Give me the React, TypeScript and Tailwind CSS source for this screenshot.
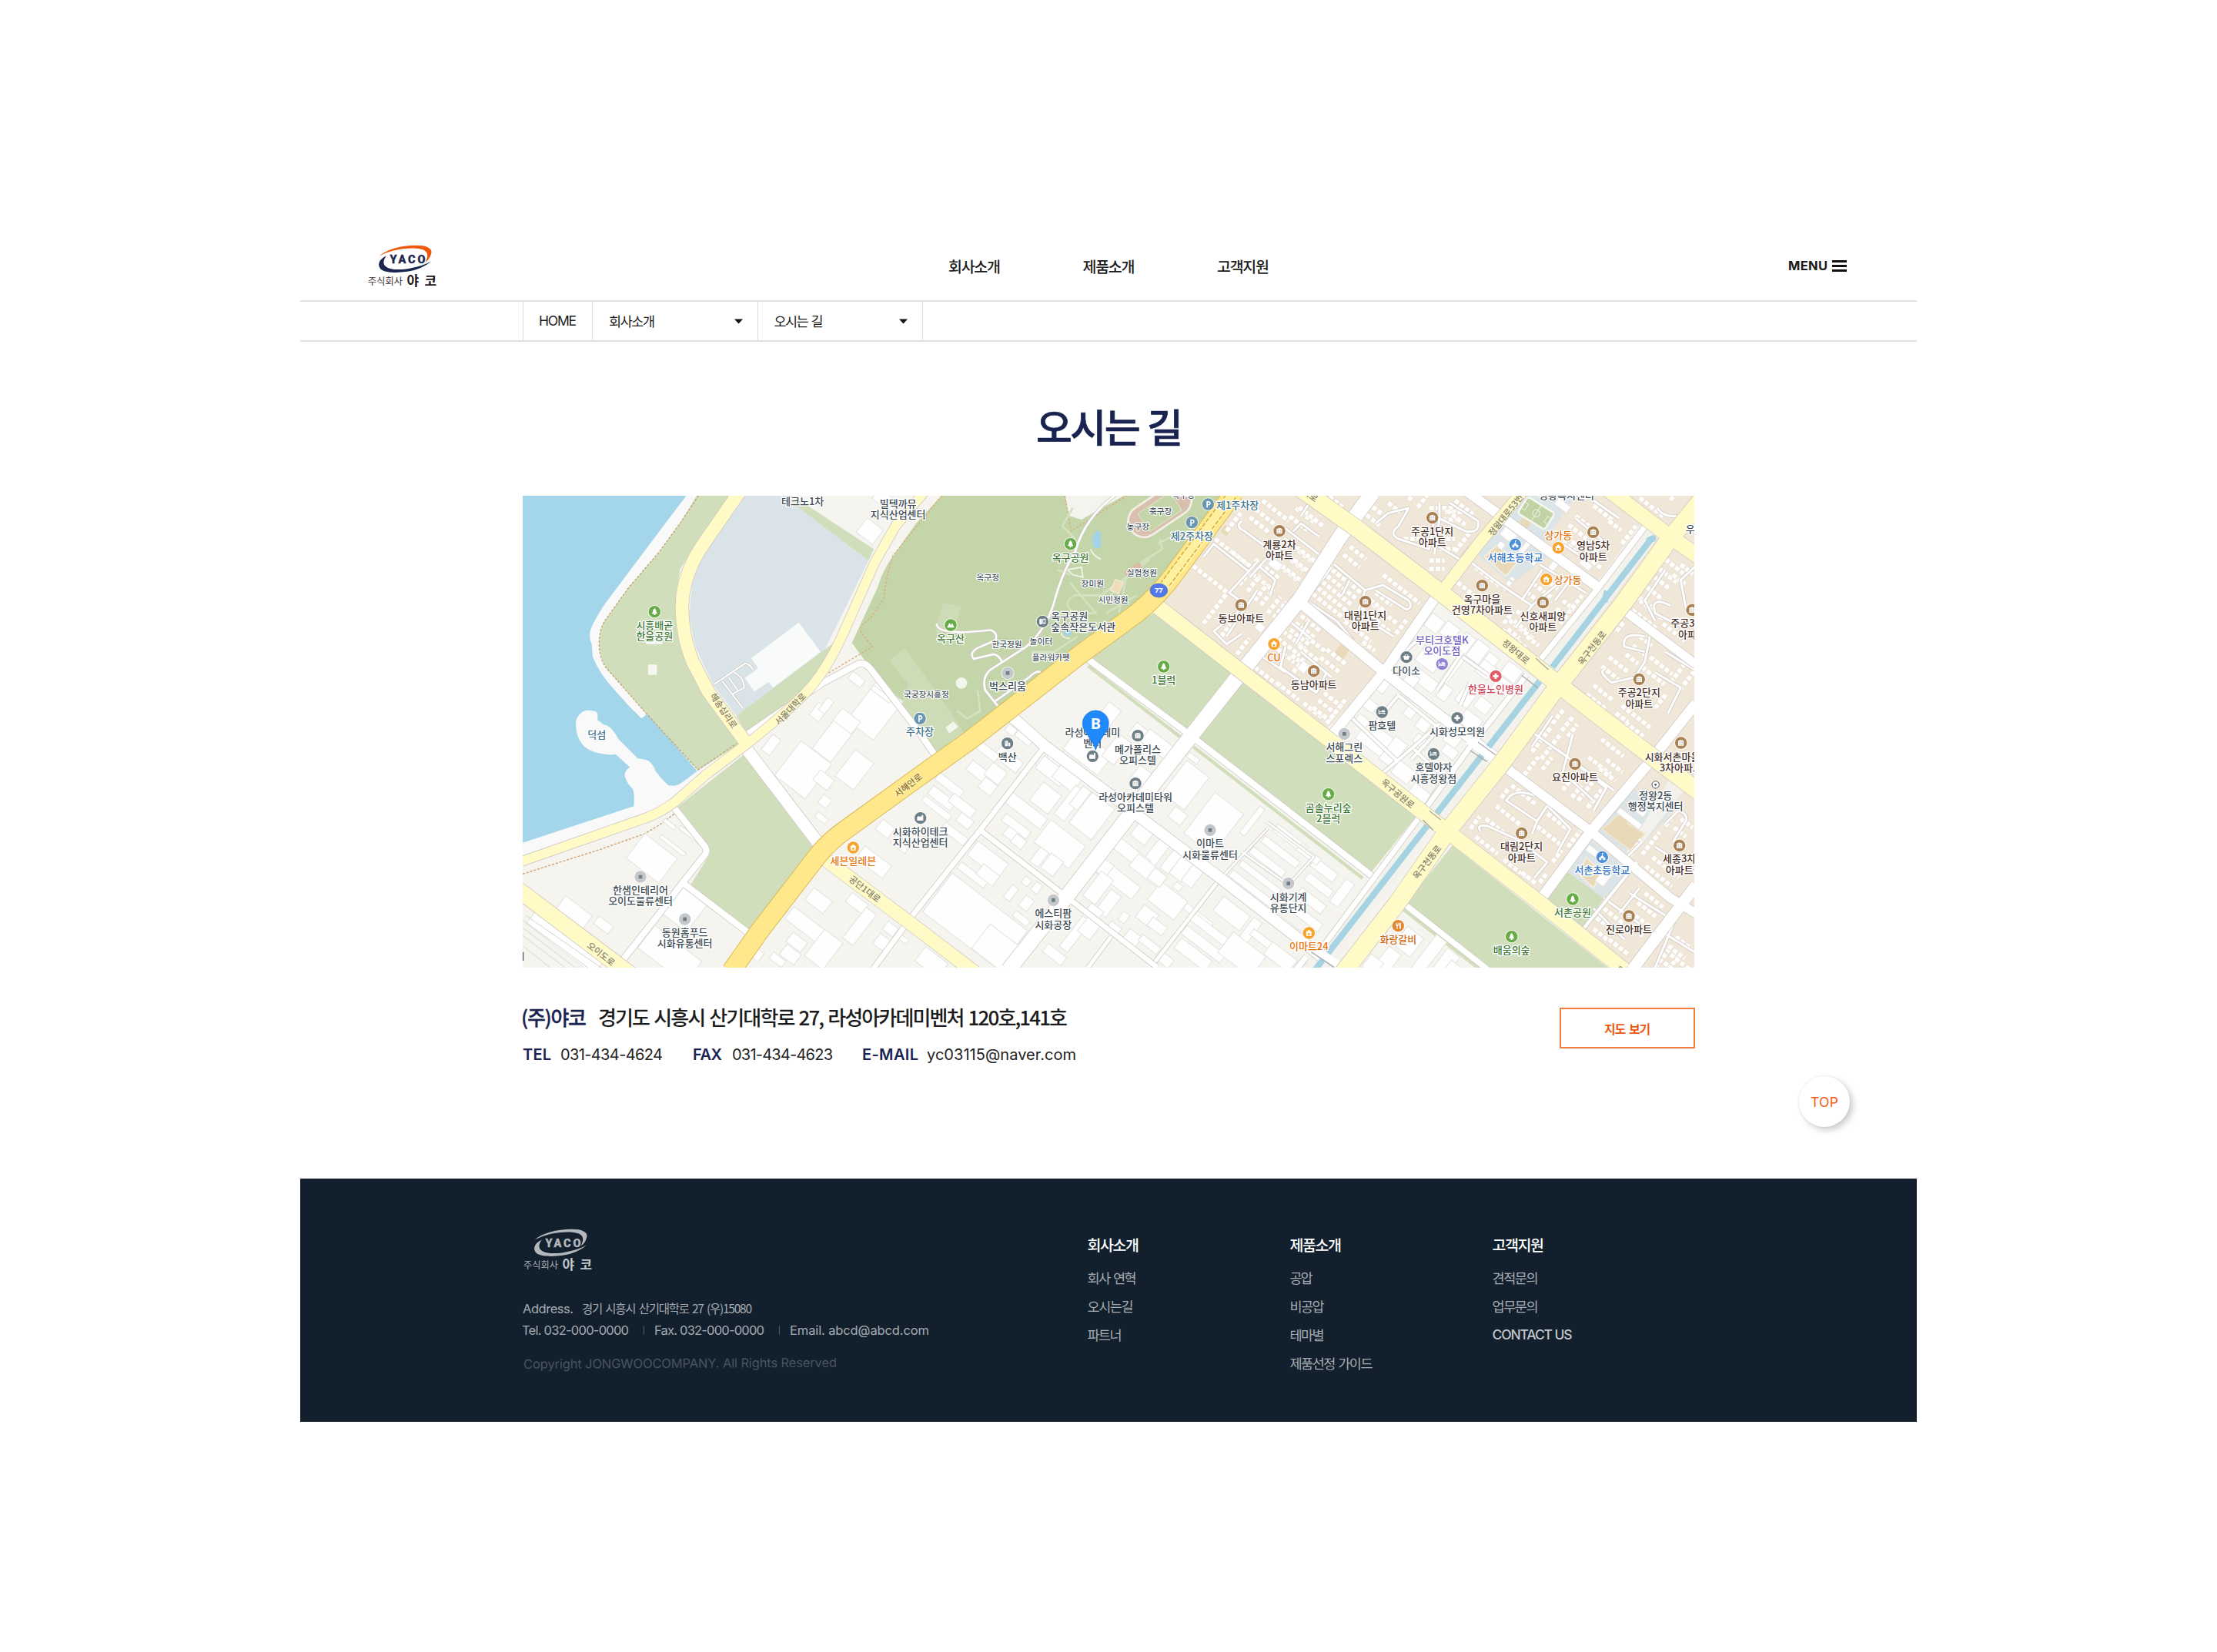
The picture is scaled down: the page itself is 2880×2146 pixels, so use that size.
import { useLayoutEffect, useRef, type ReactNode } from "react";

/* Text whose tracking is adjusted so that it fills a given width. */
function Fit({ w, className = "", children }: { w: number; className?: string; children: string }) {
  const ref = useRef<HTMLSpanElement>(null);
  useLayoutEffect(() => {
    const el = ref.current;
    if (!el) return;
    el.style.letterSpacing = "0px";
    const natural = el.getBoundingClientRect().width;
    el.style.letterSpacing = `${(w - natural) / Math.max(1, children.length - 1)}px`;
  }, [w, children]);
  return (
    <span className={`block shrink-0 ${className}`} style={{ width: w }}>
      <span ref={ref} className="inline-block whitespace-nowrap">
        {children}
      </span>
    </span>
  );
}

function Logo({ mono = false }: { mono?: boolean }) {
  const a = mono ? "#b4b8bd" : "#ee5a0c";
  const b = mono ? "#b4b8bd" : "#1a2550";
  const c = mono ? "#a9afb5" : "#3a3032";
  const d = mono ? "#c3c7ca" : "#1d1416";
  return (
    <svg width="91" height="56" viewBox="0 0 91 56" className="block shrink-0">
      <path d="M14.5 14.8C24 6 43 .8 63 .8C78 .8 84.5 5.500 82 12C80.500 17 78.500 20 74.500 22.600C77.500 16 78.500 12 75 8.500C70 4.200 58 4 46 5.200C34 6.500 23 10 14.500 14.800Z" fill={a} />
      <path d="M24 14.500C19.500 20 18.500 26 25 29.500C32 33 45 32.500 55 30.500C66 28.500 75 25.500 82 21.500C75 28 63 33 51 34.800C38 36.600 23 36.500 17 32C11.500 27 14 18.500 24 14.500Z" fill={b} />
      <text x="28.500" y="24" textLength="46" lengthAdjust="spacing" fontSize="14.500" fontWeight="800" fill={b} stroke={b} strokeWidth=".4" className="font-['Roboto','Liberation_Sans',sans-serif]">YACO</text>
      <text x="0" y="51.500" textLength="45" lengthAdjust="spacingAndGlyphs" fontSize="12.500" fill={c} className="font-['Noto_Sans_CJK_KR',sans-serif]">주식회사</text>
      <g fontSize="17" fontWeight="700" fill={d} className="font-['Noto_Sans_CJK_KR',sans-serif]">
        <text x="50.500" y="52.500">야</text>
        <text x="73.500" y="52.500">코</text>
      </g>
    </svg>
  );
}

/* ------------------------------------------------------------------ map */

type Road = { d: string; w: number; c?: string; e?: string };

const YELLOW = "#fffac6";

const MINOR: Road[] = [
  { d: "M2350 0Q2220 90 2180 230Q2130 310 2100 420Q2070 530 1990 600L1850 690Q1815 720 1830 770L1885 840", w: 8 },
  { d: "M1640 510Q1640 560 1850 535Q1880 545 1870 575L1800 605Q1765 625 1785 648L1860 630Q1880 630 1895 658", w: 7 },
  { d: "M1865 815L2000 720Q2030 690 2045 700", w: 7 },
  { d: "M775 745L895 665Q915 670 925 690M845 785L890 760Q890 720 850 700M805 735L885 840M830 720L865 770", w: 6 },
  { d: "M2930 1310L2750 1500M2930 1285L3110 1420L3010 1530M2830 1400L3000 1520", w: 8 },
  { d: "M2740 1510L2490 1830M2320 1730L2230 1851M2490 1840L2170 1590", w: 14 },
  { d: "M3440 640L3520 570M3690 620L3590 770M3690 640L3790 710M3720 740L3680 830M3440 790L3340 910M3440 790L3600 920L3490 1040", w: 12 },
  { d: "M3370 1100L3500 990L3600 900M3260 880L3440 1050M3500 1000L3620 1110L3540 1230M3660 620L3560 560", w: 12 },
  { d: "M3100 30L3060 90M2680 250L2720 200L2860 310M2890 380L2770 560M2890 270L2780 390L2850 440M3000 140L3130 240M3030 150L3060 120L3130 170", w: 9 },
  { d: "M2830 110Q2800 130 2840 150L2950 230L2860 330M2900 290L2960 340L2940 400M2820 460L2720 540L2770 590L2830 550", w: 9 },
  { d: "M3090 500L3040 590M3100 570L2990 480M2910 640L3000 700M3000 600L2980 680L3120 780L3160 700M3060 620L3180 720", w: 9 },
  { d: "M3190 280L3310 380L3380 360L3480 420Q3500 450 3470 455L3350 380M3310 380L3280 470L3420 560M3250 340L3220 400", w: 9 },
  { d: "M3180 290L3080 420L3200 500L3300 620M3350 120L3400 80L3480 60L3440 130Q3400 160 3440 180L3560 220L3580 100", w: 9 },
  { d: "M3600 40L3600 100L3700 150Q3760 160 3750 110L3640 40M3600 100L3580 240M3580 200L3680 260L3720 210", w: 9 },
  { d: "M3720 270L3840 360L3960 440L4080 340M3960 440L3900 520M4000 300L3920 420M3990 280L4170 390M4140 300L4050 420", w: 9 },
  { d: "M4130 100L4240 190L4200 260M4200 30L4300 100M4080 200L4170 260M4450 60Q4470 100 4550 90L4594 30M4480 300L4400 420L4440 500", w: 9 },
  { d: "M4594 290L4540 340L4560 450M4500 440Q4420 400 4440 470L4540 520M4400 560Q4310 540 4320 600L4400 620M4420 560L4400 660L4360 720L4270 740Q4220 700 4240 690", w: 9 },
  { d: "M4480 620L4594 690M4440 700L4540 760L4490 860M4040 870L3960 990M3970 940L4280 1160M4060 1000L4250 1150L4200 1240M4120 940L4080 1090L4200 1200", w: 9 },
  { d: "M3970 1180Q3890 1150 3860 1200L3980 1280L4020 1220L4110 1310L4060 1400M3760 1320Q3740 1290 3790 1300L3900 1350L4020 1440L3970 1500", w: 9 },
  { d: "M3980 1280L3960 1330M4240 1580L4380 1680M4380 1540L4300 1640M4340 1560L4500 1660M4200 1620L4320 1740M4480 1720L4594 1790M4520 1660L4440 1851", w: 9 },
  { d: "M4480 1290L4530 1240Q4570 1250 4560 1280L4510 1360M4440 1380L4594 1480M4390 1360L4330 1420", w: 9 },
];

const WHITE: Road[] = [
  { d: "M905 940L1190 745L1330 670Q1360 655 1385 690L1570 930L1635 1025", w: 24 },
  { d: "M900 1000L1190 1380", w: 46 },
  { d: "M615 1225L738 1380Q748 1398 736 1412L650 1520L560 1640L410 1830", w: 24 },
  { d: "M650 1520L915 1722", w: 24 },
  { d: "M1930 870L2060 985L2400 1240L2750 1505L3150 1815", w: 42 },
  { d: "M2060 990L1810 1315L1560 1630L1390 1860", w: 20 },
  { d: "M1810 1315L2140 1570L2500 1850", w: 20 },
  { d: "M3340 0L3210 175L3060 410L2840 685L2630 950L2420 1220L2150 1570L1920 1860", w: 58 },
  { d: "M2225 645L2635 950L3120 1325L3335 1492", w: 24 },
  { d: "M3060 430L3385 700L3570 845L3830 1040", w: 40 },
  { d: "M3590 400L3390 690L3180 945", w: 38 },
  { d: "M3700 -10L4220 370", w: 38 },
  { d: "M4410 120L4220 370L3985 660", w: 22 },
  { d: "M3940 710L3720 990L3510 1280L3130 1790", w: 20 },
  { d: "M4320 460L4600 670", w: 34 },
  { d: "M3870 1080L4190 1320L4500 1580L4600 1640", w: 36 },
  { d: "M4600 820L4410 1060L4190 1320L3990 1590", w: 40 },
  { d: "M4600 1530L4350 1860", w: 44 },
  { d: "M3465 1605L3790 1860", w: 22 },
  { d: "M4160 1700L4370 1440", w: 12 },
  { d: "M3130 1790L3200 1850M3080 1810L3040 1860", w: 22 },
];

const YELLOWS: Road[] = [
  { d: "M870 0L745 180Q650 310 648 440Q648 560 690 660L750 775L905 985", w: 50, c: YELLOW },
  { d: "M1590 0L1480 130L1400 270L1280 540Q1210 700 1120 790Q1050 860 900 980L740 1100L620 1205Q560 1250 500 1270L20 1438", w: 36, c: YELLOW },
  { d: "M1200 1425L1560 1695L1790 1870", w: 52, c: YELLOW },
  { d: "M0 1540L450 1880", w: 62, c: YELLOW },
  { d: "M2490 435L3360 1110L3630 1320L4000 1605L4320 1860", w: 58, c: YELLOW },
  { d: "M3060 -15L3285 145L3590 378L3960 665L4060 745L4260 900L4410 1015L4610 1165", w: 66, c: YELLOW },
  { d: "M4260 -10L4490 165L4610 250", w: 58, c: YELLOW },
  { d: "M3930 -10L3760 190L3610 385", w: 44, c: YELLOW },
  { d: "M4620 30L4490 190L4317 430L4060 755L3845 1050L3630 1320L3435 1600L3225 1870", w: 68, c: YELLOW },
];

const HIGHWAY = "M840 1865L955 1702L1180 1410Q1225 1355 1290 1310L1560 1115L1770 965L2190 638L2420 470Q2500 405 2560 325L2800 0";

function Roads({ list }: { list: Road[] }) {
  return (
    <g fill="none" strokeLinejoin="round">
      {list.map((r, i) => (
        <path key={`e${i}`} d={r.d} stroke={r.e ?? "#cfcac6"} strokeWidth={r.w + 5} />
      ))}
      {list.map((r, i) => (
        <path key={`f${i}`} d={r.d} stroke={r.c ?? "#ffffff"} strokeWidth={r.w} />
      ))}
    </g>
  );
}

/* Detached buildings: centre x, centre y, width, height, all turned to the street grid. */
const BUILDINGS: number[][] = [
  [1380, 150, 80, 70], [1440, 30, 90, 50],
  [530, 1425, 160, 120], [600, 1292, 55, 16], [612, 1375, 120, 16], [228, 1635, 130, 62], [342, 1685, 70, 36], [660, 1620, 120, 140], [190, 1755, 330, 60], [600, 1800, 230, 110],
  [680, 1335, 105, 14],
  [995, 983, 40, 75], [1120, 1080, 150, 170], [1240, 960, 90, 160], [1200, 1120, 70, 50], [1320, 1080, 90, 130], [1205, 1203, 40, 40], [1192, 1268, 50, 24],
  [1180, 855, 46, 60], [1210, 830, 30, 60], [1400, 850, 130, 190], [1328, 728, 60, 34], [1425, 785, 90, 20], [1290, 890, 90, 60],
  [1440, 1310, 60, 50], [1500, 1370, 70, 40], [1395, 1440, 130, 60], [1330, 1600, 80, 44], [1180, 1590, 90, 60], [1340, 1690, 50, 150], [1150, 1700, 210, 60], [1460, 1700, 50, 40], [1095, 1752, 70, 46], [1070, 1800, 70, 50], [1020, 1820, 60, 30], [1430, 1755, 60, 50], [1510, 1740, 40, 20], [1200, 1780, 90, 130], [940, 1800, 40, 40],
  [1690, 1140, 120, 34], [1660, 1190, 110, 40], [1740, 1220, 110, 40], [1640, 1230, 130, 26], [1800, 1085, 80, 46], [1870, 1095, 70, 60], [1840, 1145, 60, 50], [1750, 1280, 60, 40], [1710, 1330, 110, 34], [1920, 1040, 110, 50], [1840, 1010, 90, 34], [1980, 955, 70, 30], [1930, 925, 40, 30],
  [2300, 880, 60, 120], [2430, 940, 70, 60], [2230, 1010, 170, 100], [2340, 1000, 60, 110], [2500, 980, 120, 60], [2440, 1110, 70, 70],
  [2090, 1085, 120, 60], [2150, 1110, 100, 70], [2065, 1190, 90, 90], [2160, 1210, 50, 140], [2200, 1190, 40, 90], [2100, 1040, 60, 22], [1990, 1240, 170, 50], [1950, 1300, 120, 34], [2245, 1260, 110, 150], [2120, 1370, 170, 110], [1930, 1330, 50, 40], [1960, 1360, 50, 40], [2040, 1420, 40, 70], [2090, 1450, 60, 70], [1840, 1430, 150, 70], [1780, 1490, 130, 30], [1840, 1490, 80, 50], [1930, 1560, 30, 60], [1990, 1515, 30, 30], [2030, 1540, 30, 40], [1990, 1600, 40, 50],
  [1790, 1670, 370, 190], [1970, 1660, 70, 26], [1880, 1780, 170, 120], [1620, 1830, 110, 70],
  [2610, 1140, 110, 160], [2640, 1035, 50, 22], [2720, 1290, 140, 200], [2580, 1260, 60, 50],
  [2440, 1330, 70, 60], [2500, 1400, 50, 120], [2400, 1410, 150, 50], [2460, 1470, 130, 60], [2350, 1510, 170, 60], [2290, 1460, 60, 60], [2560, 1430, 40, 110], [2600, 1460, 60, 100], [2640, 1490, 50, 90], [2540, 1590, 130, 90], [2270, 1540, 60, 120], [2310, 1600, 50, 100], [2580, 1535, 30, 26], [2500, 1500, 60, 50], [2250, 1640, 60, 60], [2370, 1655, 30, 40], [2460, 1650, 70, 60], [2500, 1690, 70, 40], [2330, 1700, 50, 40],
  [2180, 1720, 40, 150], [2240, 1690, 60, 90], [2100, 1800, 90, 40], [2400, 1740, 60, 60], [2470, 1760, 90, 30], [2660, 1650, 130, 26],
  [2700, 1700, 170, 34], [2680, 1760, 190, 40], [2640, 1800, 150, 50], [2790, 1640, 130, 70], [2860, 1710, 40, 110], [2920, 1750, 130, 30], [2830, 1800, 160, 100], [2980, 1810, 120, 60], [2530, 1820, 60, 40],
  [2870, 1280, 24, 130], [3020, 1350, 150, 34], [2980, 1400, 170, 30], [2930, 1440, 160, 30], [2900, 1500, 190, 26], [2870, 1545, 210, 30], [3060, 1640, 190, 36], [3100, 1590, 120, 40], [3130, 1530, 120, 34], [3150, 1470, 110, 40], [3220, 1560, 40, 110], [3090, 1410, 100, 30], [3010, 1690, 160, 30],
  [3350, 960, 130, 90], [3420, 1010, 60, 110], [3260, 1000, 60, 40], [3460, 1090, 80, 60], [3530, 1180, 100, 50],
  [3580, 510, 60, 60], [3640, 540, 60, 60], [3700, 590, 50, 80], [3750, 620, 60, 80], [3800, 655, 50, 50], [3880, 700, 70, 60], [3850, 760, 80, 60], [3780, 690, 60, 60], [3560, 650, 90, 70], [3540, 730, 110, 50], [3650, 690, 30, 120], [3490, 730, 50, 50], [3470, 780, 50, 30], [3380, 750, 40, 60], [3330, 830, 50, 40], [3300, 890, 50, 34], [3620, 780, 40, 60], [3700, 800, 60, 60], [3770, 830, 60, 50], [3490, 850, 40, 60], [3540, 900, 50, 60], [3530, 970, 60, 40], [3650, 960, 60, 50], [3640, 1010, 60, 40], [3580, 1090, 90, 60], [3720, 890, 80, 60],
  [3480, 1750, 80, 90], [3560, 1800, 50, 160], [3620, 1840, 60, 120], [3400, 1820, 60, 90], [3660, 1870, 80, 60], [3340, 1840, 60, 60],
  [3870, 165, 60, 40], [3920, 230, 20, 90], [3840, 205, 26, 26], [4080, 50, 60, 30], [4370, 1230, 80, 28], [4400, 1180, 60, 26], [4340, 1270, 110, 24], [4200, 1400, 60, 26], [4240, 1500, 40, 60], [2960, 280, 50, 34], [3070, 680, 34, 40], [2900, 525, 34, 30], [4170, 280, 50, 26], [4040, 290, 26, 50],
];

/* Apartment rows: start x, start y, direction, length, number of rows, gap. */
const ROWS: number[][] = [
  [2725, 180, 38, 170, 1, 40], [2640, 285, 38, 170, 1, 40], [2790, 230, 38, 110, 1, 30], [2860, 95, 38, 100, 1, 30], [2910, 30, 38, 130, 2, 44], [3040, 60, 38, 90, 2, 40], [2770, 150, -52, 90, 1, 30],
  [2990, 180, 38, 150, 3, 46], [2880, 260, 38, 120, 2, 50], [2680, 510, -52, 150, 1, 40], [2820, 360, -52, 80, 2, 40], [2880, 420, -52, 80, 2, 30], [2930, 470, -52, 80, 2, 30], [2810, 630, -52, 80, 1, 30], [2750, 560, -52, 60, 1, 30],
  [3080, 20, 38, 120, 2, 46], [3150, 0, 38, 100, 1, 46], [3040, 210, 38, 110, 3, 46], [3060, 480, 38, 100, 3, 34], [2990, 540, 38, 110, 3, 34], [2880, 680, 38, 130, 1, 34], [2965, 740, 38, 110, 1, 34], [3080, 560, 38, 100, 3, 46], [3160, 610, 38, 100, 2, 40], [3070, 820, 38, 90, 2, 40], [3150, 780, 38, 90, 3, 36], [3160, 900, -52, 120, 1, 34], [3030, 700, -52, 70, 1, 34],
  [3250, 210, 38, 80, 2, 40], [3180, 300, 38, 150, 5, 30], [3380, 320, 38, 180, 1, 30], [3320, 420, 38, 150, 2, 42], [3230, 500, 38, 130, 2, 40], [3300, 580, 38, 60, 1, 40], [3430, 550, -52, 70, 1, 40], [3350, 390, 38, 80, 2, 34],
  [3320, 40, 38, 90, 2, 40], [3400, 40, 38, 60, 1, 40], [3480, 30, -52, 60, 2, 44], [3560, 60, 0, 120, 2, 46], [3620, 75, 0, 90, 1, 46], [3660, 30, 38, 90, 2, 50], [3460, 180, 0, 90, 1, 40], [3560, 265, 0, 60, 2, 32], [3660, 230, -52, 90, 1, 40], [3600, 180, 0, 60, 2, 40],
  [3740, 290, 38, 120, 1, 40], [3670, 350, 38, 90, 1, 40], [3960, 280, -52, 50, 1, 40], [3850, 380, -52, 60, 1, 40], [3990, 320, 38, 90, 3, 42], [4080, 420, 38, 60, 2, 40], [3900, 460, 38, 120, 3, 46], [3850, 510, -52, 60, 1, 30], [4070, 510, -52, 140, 1, 30], [3940, 560, 38, 60, 1, 30], [3890, 500, 38, 60, 2, 40],
  [4130, 90, 38, 90, 3, 44], [4200, 50, 38, 90, 1, 44], [4260, 110, 38, 60, 1, 44], [4310, 200, -52, 90, 1, 40], [4200, 220, 38, 70, 2, 40], [4080, 190, 38, 80, 1, 40],
  [4380, 20, 38, 120, 1, 40], [4500, 30, -52, 40, 1, 40], [4560, 80, 38, 50, 1, 40], [4480, 260, 38, 90, 2, 44], [4440, 330, 38, 70, 3, 50], [4380, 420, 38, 120, 2, 46], [4540, 280, 38, 60, 2, 50], [4470, 510, 38, 110, 1, 46],
  [4290, 540, -52, 50, 1, 40], [4380, 560, 38, 60, 3, 44], [4260, 640, 38, 100, 2, 46], [4200, 750, 38, 100, 3, 44], [4420, 640, 38, 110, 2, 50], [4350, 860, 38, 90, 2, 44], [4310, 830, 38, 60, 2, 36], [4500, 740, -52, 90, 2, 46], [4440, 840, -52, 70, 1, 46],
  [3960, 1010, -52, 120, 2, 46], [4040, 900, -52, 70, 2, 46], [4000, 1080, -52, 60, 1, 46], [4080, 1160, -52, 60, 2, 46], [4140, 1200, -52, 90, 2, 46], [4180, 1030, 38, 110, 2, 50], [4230, 960, 38, 110, 1, 50], [4100, 950, -52, 60, 1, 50], [3930, 1100, -52, 90, 1, 40], [4250, 1040, 38, 80, 2, 44],
  [3880, 1140, 38, 120, 1, 40], [3840, 1190, -52, 50, 1, 40], [3820, 1220, 38, 120, 1, 40], [3780, 1270, 38, 110, 1, 40], [3720, 1310, -52, 60, 1, 40], [3740, 1340, 38, 110, 1, 40], [4020, 1250, 38, 110, 1, 40], [3980, 1300, 38, 120, 1, 40], [4100, 1380, -52, 80, 1, 40], [3850, 1430, 38, 110, 1, 40], [3920, 1480, 38, 70, 1, 40], [3990, 1520, -52, 50, 1, 40], [4040, 1440, -52, 60, 1, 40],
  [4390, 1410, -52, 110, 1, 40], [4480, 1300, -52, 90, 1, 40], [4430, 1420, 38, 130, 2, 44], [4540, 1270, 38, 60, 2, 44], [4350, 1400, -52, 60, 1, 40],
  [4240, 1620, 38, 100, 2, 46], [4400, 1560, 38, 90, 3, 46], [4260, 1740, 38, 100, 2, 46], [4200, 1700, 38, 70, 2, 46], [4380, 1730, -52, 60, 2, 46], [4440, 1850, -52, 110, 2, 46], [4520, 1730, 38, 80, 2, 46], [4500, 1800, 38, 90, 2, 40],
];

type Kind = "tree" | "apt" | "park" | "shop" | "school" | "bed" | "cross" | "dot" | "bldg" | "book" | "mount" | "food" | "basket" | "ring" | "fact";
const INK = "#3d4b54";
const GREEN = "#3d7a33";
const BROWN = "#4a3128";
const BLUE = "#3b7592";

type Poi = { x: number; y: number; k?: Kind; t: [string, number][]; c?: string; bg?: string; lx?: number };

const apt = (x: number, y: number, ...lines: string[]): Poi => ({
  x, y, k: "apt", bg: "#a98052", c: BROWN, t: lines.map((l, i) => [l, y + 52 + i * 43]),
});
const poi = (k: Kind, bg: string, c: string, x: number, y: number, ...lines: string[]): Poi => ({
  x, y, k, bg, c, t: lines.map((l, i) => [l, y + 52 + i * 43]),
});

const POIS: Poi[] = [
  poi("tree", "#67ab49", GREEN, 541, 464, "시흥배곧", "한울공원"),
  { x: 316, y: 0, t: [["덕섬", 942]], c: BLUE },
  { x: 1118, y: 0, t: [["테크노1차", 34]] },
  { x: 1490, y: 0, t: [["빌텍까뮤", 44], ["지식산업센터", 86]] },
  poi("park", "#6b96b0", BLUE, 1575, 880, "주차장"),
  poi("tree", "#67ab49", GREEN, 2162, 200, "옥구공원"),
  poi("mount", "#67ab49", GREEN, 1695, 516, "옥구산"),
  { x: 2053, y: 502, k: "book", bg: "#6f7f88", lx: 2086, t: [["옥구공원", 482], ["숲속작은도서관", 524]] },
  poi("dot", "#c4c8cd", INK, 1917, 703, "벅스리움"),
  poi("tree", "#67ab49", GREEN, 2525, 678, "1블럭"),
  { x: 2698, y: 45, k: "park", bg: "#6b96b0", c: BLUE, lx: 2730, t: [["제1주차장", 48]] },
  poi("park", "#6b96b0", BLUE, 2635, 116, "제2주차장"),
  apt(2976, 149, "계룡2차", "아파트"),
  apt(2827, 438, "동보아파트"),
  poi("shop", "#f7a32c", "#e8730c", 2955, 590, "CU"),
  apt(3110, 695, "동남아파트"),
  apt(3572, 98, "주공1단지", "아파트"),
  apt(3311, 425, "대림1단지", "아파트"),
  poi("basket", "#6f7f88", INK, 3471, 641, "다이소"),
  { x: 3610, y: 668, k: "bed", bg: "#9384d6", c: "#7060c4", t: [["부티크호텔K", 575], ["오이도점", 617]] },
  poi("cross", "#df5c68", "#cf4256", 3819, 715, "한울노인병원"),
  apt(3766, 362, "옥구마을", "건영7차아파트"),
  poi("school", "#4c8fd6", "#2c73c6", 3895, 202, "서해초등학교"),
  { x: 4063, y: 215, k: "shop", bg: "#f7a32c", c: "#e8730c", t: [["상가동", 165]] },
  { x: 4016, y: 338, k: "shop", bg: "#f7a32c", c: "#e8730c", lx: 4046, t: [["상가동", 340]] },
  apt(4199, 154, "영남5차", "아파트"),
  apt(4003, 428, "신호새피앙", "아파트"),
  apt(4584, 457, "주공3단지", "아파트"),
  apt(4378, 727, "주공2단지", "아파트"),
  poi("bed", "#6f7f88", INK, 3376, 855, "팜호텔"),
  poi("dot", "#c4c8cd", INK, 3229, 940, "서해그린", "스포렉스"),
  poi("cross", "#6f7f88", INK, 3669, 878, "시화성모의원"),
  { x: 4595, y: 0, t: [["우성", 142]] },
  { x: 4095, y: 0, t: [["정왕복지센터", 9]] },
  poi("dot", "#c4c8cd", INK, 486, 1497, "한샘인테리어", "오이도물류센터"),
  poi("dot", "#c4c8cd", INK, 659, 1662, "동원홈푸드", "시화유통센터"),
  poi("shop", "#f7a32c", "#e8730c", 1315, 1383, "세븐일레븐"),
  poi("fact", "#6f7f88", INK, 1577, 1268, "시화하이테크", "지식산업센터"),
  poi("bldg", "#6f7f88", INK, 1916, 977, "백산"),
  { x: 2248, y: 1027, k: "fact", bg: "#6f7f88", t: [["라성아카데미", 933], ["벤처", 975]] },
  poi("apt", "#6f7f88", INK, 2424, 947, "메가폴리스", "오피스텔"),
  poi("apt", "#6f7f88", INK, 2415, 1133, "라성아카데미타워", "오피스텔"),
  poi("dot", "#c4c8cd", INK, 2706, 1315, "이마트", "시화물류센터"),
  poi("dot", "#c4c8cd", INK, 2095, 1588, "에스티팜", "시화공장"),
  poi("dot", "#c4c8cd", INK, 3011, 1523, "시화기계", "유통단지"),
  poi("shop", "#f7a32c", "#e8730c", 3091, 1716, "이마트24"),
  poi("tree", "#67ab49", GREEN, 3167, 1175, "곰솔누리숲", "2블럭"),
  poi("bed", "#6f7f88", INK, 3577, 1018, "호텔야자", "시흥정왕점"),
  apt(4128, 1057, "요진아파트"),
  apt(3920, 1327, "대림2단지", "아파트"),
  { x: 4541, y: 975, k: "apt", bg: "#a98052", c: BROWN, t: [] },
  { x: 0, y: 0, lx: 4400, c: BROWN, t: [["시화서촌마을", 1029]] },
  { x: 0, y: 0, lx: 4457, c: BROWN, t: [["3차아파트", 1071]] },
  { x: 4442, y: 1138, k: "ring", t: [["정왕2동", 1179], ["행정복지센터", 1221]] },
  apt(4535, 1375, "세종3차", "아파트"),
  poi("school", "#4c8fd6", "#2c73c6", 4234, 1420, "서촌초등학교"),
  poi("tree", "#67ab49", GREEN, 4119, 1584, "서촌공원"),
  apt(4338, 1650, "진로아파트"),
  poi("tree", "#67ab49", GREEN, 3881, 1730, "배움의숲"),
  poi("food", "#e0882f", "#cf6410", 3439, 1688, "화랑갈비"),
];

const SMALL: [string, number, number][] = [
  ["국궁장시흥정", 1600, 786], ["옥구정", 1840, 330], ["장미원", 2248, 355], ["실험정원", 2440, 312], ["시민정원", 2328, 417],
  ["한국정원", 1914, 591], ["놀이터", 2047, 578], ["플라워카펫", 2086, 641], ["농구장", 2425, 132], ["축구장", 2513, 73], ["족구장", 2602, 10],
];

const STREETS: [string, number, number, number][] = [
  ["해송십리로", 810, 850, 56], ["서울대학로", 1071, 843, -46], ["공단1대로", 1360, 1545, 38], ["서해안로", 1530, 1140, -38], ["오이도로", 332, 1798, 38],
  ["정왕대로", 3897, 620, 40], ["옥구천동로", 4195, 605, -52], ["정왕대로53번길", 3868, 75, -52], ["옥구공원로", 3437, 1173, 40], ["옥구천동로", 3552, 1440, -52], ["정왕대로", 3072, -10, 38], ["옥구공원로", 4352, 1900, 38],
];

function Glyph({ k }: { k: Kind }): ReactNode {
  switch (k) {
    case "tree":
      return <path d="M0-14C5-11 6-5 7 0C9 4 11 6 11 8H3V13H-3V8H-11C-11 6-9 4-7 0C-6-5-5-11 0-14Z" fill="#fff" />;
    case "mount":
      return <path d="M-14 10L-5-9L1 1L6-8L14 10Z" fill="#fff" />;
    case "apt":
      return (
        <g fill="#fff">
          <path d="M-11-8L0-12L11-8V11H-11Z" opacity=".95" />
          <path d="M-7-5H-2V0H-7ZM2-5H7V0H2ZM-7 3H-2V8H-7ZM2 3H7V8H2Z" fill="#00000030" />
        </g>
      );
    case "park":
      return <path d="M-6 13V-12H2A8 8 0 0 1 2 4H-1V13ZM-1-7V0H2A3.500 3.500 0 0 0 2-7Z" fill="#fff" />;
    case "shop":
      return (
        <g fill="#fff">
          <path d="M-13-2L0-13L13-2H10V11H-10V-2Z" />
          <path d="M-4 1H4V8H-4Z" fill="#f7a32c" />
        </g>
      );
    case "school":
      return <path d="M-1-15H7L4-12L1-10V-7L6-2V1H12V12H3V5H-3V12H-12V1H-6V-2L-1-7Z" fill="#fff" />;
    case "bed":
      return <path d="M-14-10H-11V2H12V9H9V6H-11V9H-14ZM-9-3H-4V0H-9ZM-2-7H8Q12-7 12-2V0H-2Z" fill="#fff" />;
    case "cross":
      return <path d="M-4-11H4V-4H11V4H4V11H-4V4H-11V-4H-4Z" fill="#fff" />;
    case "dot":
      return <rect x="-7" y="-7" width="14" height="14" fill="#6f7f88" />;
    case "bldg":
      return <path d="M-10-10H2V11H-10ZM4-3H11V11H4ZM-7-7V-4H-4V-7ZM-7-1V2H-4V-1Z" fill="#fff" fillRule="evenodd" />;
    case "book":
      return <path d="M-12-9L-2-11V11H-12ZM0-11H12V9H0ZM3-7V4H9V-7Z" fill="#fff" fillRule="evenodd" />;
    case "fact":
      return <path d="M-13 10V-4L-5-8V-4L2-8V-4H5V-12H11V10Z" fill="#fff" />;
    case "food":
      return <path d="M-9-12H-7V-5H-5V-12H-3V-5H-1V-12H1V-2L-2 1V12H-6V1L-9-2ZM4-12H10V12H5V2H4Z" fill="#fff" />;
    case "basket":
      return <path d="M-13-4H-9L-3-12L-1-10L-5-4H5L1-10L3-12L9-4H13V0H11L8 10H-8L-11 0H-13Z" fill="#fff" />;
    default:
      return null;
  }
}

function MapView() {
  const park = "#d0debb";
  return (
    <svg viewBox="27 12 4566 1839" preserveAspectRatio="none" className="block h-[613px] w-[1522px] shrink-0" role="img" aria-label="오시는 길 지도">
      <rect x="0" y="0" width="4600" height="1860" fill="#f6f4ef" />
      {/* coast */}
      <path d="M0 0H730L340 510L325 570L330 640L500 860L710 1082L860 980L890 1010L600 1240L500 1285L0 1450Z" fill="#f9f9f9" />
      <path
        d="M0 0H674L575 130L440 310L350 430Q300 505 290 540Q284 565 296 590L300 640Q320 690 360 740L440 830L490 880L513 862L600 960L707 1085L650 1128Q625 1148 595 1140Q570 1120 545 1085Q530 1045 505 1040L475 1035L400 960Q370 905 345 905L318 885Q322 858 312 853Q285 843 262 853Q234 870 234 900Q236 985 300 1008Q350 1025 390 1020L445 1070Q420 1085 426 1108Q432 1130 452 1150Q465 1165 460 1222L0 1373Z"
        fill="#a3d6eb"
      />
      <path d="M712 0H860L700 200L640 300L625 400V500L645 600L700 720L860 960L880 975L710 1082L600 960L510 862L350 680Q325 630 325 590Q325 530 350 495L440 370L560 230L640 120Z" fill={park} />
      <path d="M712 12L640 120L560 230L440 370L350 495Q325 530 325 590Q325 640 350 680L510 862L710 1080L860 978" fill="none" stroke="#c8a071" strokeWidth="4" strokeDasharray="9 6" />
      <path d="M27 1486L330 1390L500 1330L560 1295L620 1250" fill="none" stroke="#c8a071" strokeWidth="4" strokeDasharray="9 6" />
      <path d="M508 560H572V590H508ZM516 670H550V710H516Z" fill="#f6f7f2" />
      {/* campus */}
      <path d="M893 0H1030L1375 265L1190 640L860 870L770 750L700 600L675 480L690 330L740 220Z" fill="#dae3e7" />
      <path d="M1025 0H1060L1395 220L1375 265Z" fill={park} />
      <path d="M860 870L1235 588L1190 700L1110 790L905 945Z" fill={park} />
      <path d="M918 645L1103 506L1188 620L1003 760L985 738L930 775L893 722L945 685Z" fill="#f9fbfa" />
      {/* hill park */}
      <path d="M1670 0H2780L2440 470L1770 960L1640 1040L1350 640L1310 585L1410 370Q1430 300 1475 240L1560 120Z" fill="#c4d6a9" />
      <path d="M2140 0L2155 90L2205 105L2390 0Z" fill="#f5f3ee" />
      <path d="M1560 670L1700 860L1760 960L1640 1040L1500 820ZM1455 655L1515 605L1600 720L1540 760Z" fill="#cddbb6" />
      <path d="M1640 515L1665 430L1735 445L1720 500L1640 560Z" fill="#cddbb6" />
      <path d="M1660 12L1470 245Q1440 340 1435 410L1390 480L1345 520V545L1390 600L1215 705M2140 12L2165 150L2380 12" fill="none" stroke="#dba977" strokeWidth="4" strokeDasharray="8 7" />
      <circle cx="1737" cy="742" r="22" fill="#f3f6ec" />
      <path d="M1675 915L1705 892L1725 912L1690 938Z" fill="#f3f6ec" />
      <g fill="none" stroke="#d5e2c2" strokeWidth="8">
        <path d="M2170 60L2130 130L2180 180M2510 180L2520 220L2440 270L2300 420M2160 350L2260 470L2180 470Q2120 430 2180 400L2280 400L2420 300M2160 320L2110 300M2300 470L2420 400M2500 200L2600 150" />
        <path d="M1800 770L1810 850L1760 880L1720 850M1900 770L1960 760L2000 720M2010 620L2100 620L2190 560M2350 470L2380 330L2470 260" />
      </g>
      <path d="M2260 150Q2285 145 2280 170L2283 200Q2280 222 2258 218Q2242 200 2248 175Z" fill="#a5d3e3" />
      <path d="M2240 220Q2250 245 2280 260M2150 300L2205 290L2210 330L2170 320Z" fill="none" stroke="#eef2e2" strokeWidth="6" />
      <ellipse cx="2150" cy="545" rx="17" ry="14" fill="#a5d3e3" />
      <path d="M2125 545Q2130 570 2160 567" fill="none" stroke="#eef2e2" strokeWidth="5" />
      <path d="M2370 310L2430 270L2440 290L2385 330Z" fill="#dcb9a4" />
      <rect x="-17" y="-24" width="34" height="48" transform="translate(2343 366) rotate(25)" fill="#efdcb8" stroke="#f6efdd" strokeWidth="3" />
      <rect x="-135" y="-62" width="270" height="124" rx="60" transform="translate(2510 70) rotate(-34)" fill="#d9bfae" stroke="#f4efe6" strokeWidth="8" />
      <rect x="-75" y="-42" width="150" height="84" transform="translate(2510 75) rotate(-34)" fill="#c4d6a9" stroke="#dbe6cb" strokeWidth="3" />
      {/* green blocks */}
      <path d="M630 1225L890 1020L1165 1390L918 1710L680 1530L752 1415L748 1385Z" fill={park} />
      {/* apartments */}
      <path d="M2800 0H4600V1860H4310L3630 1320L2480 430Z" fill="#f0e7d9" />
      <path d="M3600 410L4060 745L3630 1320L3190 960L3390 700Z" fill="#f6f4ef" />
      <path d="M3385 700L3590 410L3960 690L3600 1270L3150 930Z" fill="#f6f4ef" />
      <path d="M3630 1320L3220 1860H3900L3430 1560Z" fill="#f6f4ef" />
      <path d="M3650 1375L4280 1870H3800L3470 1600Z" fill={park} />
      <path d="M2240 645L2490 465L2800 705L2620 935Z" fill={park} />
      <path d="M2650 950L2835 725L3510 1260L3325 1490Z" fill={park} />
      <path d="M2230 675L2600 960M2640 990L3300 1502M3460 1625L3760 1860" stroke={park} strokeWidth="13" fill="none" />
      <path d="M4100 1475L4240 1580L4160 1700L4010 1580Z" fill={park} />
      <g fill="#dbe4e7">
        <path d="M3850 122L4020 250L3880 357L3748 240Z" />
        <path d="M3935 0H4140L4010 190L3870 90Z" />
        <path d="M4345 1145L4500 1250L4350 1415L4205 1315Z" />
        <path d="M4185 1350L4350 1480L4240 1580L4095 1475Z" />
      </g>
      <path d="M4500 1110L4560 1150L4350 1420L4330 1400Z" fill="#f3f1ec" />
      <g fill="#e8d9b8">
        <path d="M3823 205L3905 270L3858 325L3775 250Z" stroke="#f5eedd" strokeWidth="6" />
        <path d="M3925 95L3960 115L3940 140L3910 120Z" />
        <path d="M4265 1285L4300 1250L4335 1270V1290L4400 1330L4345 1395L4232 1310Z" stroke="#f0e6cd" strokeWidth="5" />
        <path d="M4170 1420L4235 1480L4200 1540L4145 1490Z" stroke="#f5eedd" strokeWidth="6" />
        <path d="M3215 590L3250 610L3225 650L3190 625ZM2765 125L2790 140L2770 170L2745 150Z" />
      </g>
      <g transform="translate(3977 80) rotate(32)" fill="#c1d3a5" stroke="#f5f6ee">
        <rect x="-62" y="-38" width="124" height="76" rx="12" strokeWidth="8" />
        <path d="M0-34V34M-58-14H-44V14H-58M58-14H44V14H58" strokeWidth="2.500" fill="none" />
        <circle r="14" strokeWidth="2.500" fill="none" />
      </g>
      <g fill="none" strokeLinecap="butt">
        {ROWS.map(([x, y, a, len, n, gap], i) => (
          <g key={i} transform={`translate(${x} ${y}) rotate(${a})`}>
            {Array.from({ length: n }, (_, j) => (
              <g key={j}>
                <path d={`M-1 ${j * gap}H${len}`} stroke="#dfd6c8" strokeWidth="21" strokeDasharray="20 5" />
                <path d={`M0 ${j * gap}H${len}`} stroke="#fffefc" strokeWidth="18" strokeDasharray="18 7" />
              </g>
            ))}
          </g>
        ))}
      </g>
      <g fill="#fefefe" stroke="#e4e2df" strokeWidth="3">
        {BUILDINGS.map(([x, y, w, h], i) => (
          <rect key={i} x={-w / 2} y={-h / 2} width={w} height={h} transform={`translate(${x} ${y}) rotate(37.5)`} />
        ))}
      </g>
      <path d="M20 1660L320 1880M20 1690L270 1880M20 1720L230 1880M20 1760L170 1880M40 1648L360 1870" fill="none" stroke="#d5d3d0" strokeWidth="3" />
      {/* canal */}
      <path d="M4420 145L4015 690M3970 750L3060 1920" fill="none" stroke="#f4f2ed" strokeWidth="86" />
      <Roads list={MINOR} />
      <Roads list={WHITE} />
      <path d="M4425 180L4040 680M3990 735L3060 1930" fill="none" stroke="#a5d3e2" strokeWidth="24" />
      <path d="M4418 185L4432 178" stroke="#a5d3e2" strokeWidth="26" strokeLinecap="round" />
      <path d="M4242 378L4262 390L4255 430L4232 420Z" fill="#a5d3e2" />
      <path d="M3715 960L3850 1060" fill="none" stroke="#ffffff" strokeWidth="42" />
      <path d="M3130 1790L3240 1870" fill="none" stroke="#ffffff" strokeWidth="34" />
      <Roads list={YELLOWS} />
      <path d="M3975 645L4025 690M3920 712L3985 762M3750 972L3818 1022M3720 1005L3785 1048M3560 1240L3605 1275M3535 1275L3575 1315M3100 1790L3190 1850" stroke="#a9a9aa" strokeWidth="4" />
      <path d={HIGHWAY} fill="none" stroke="#d8b95c" strokeWidth="77" strokeLinejoin="round" />
      <path d={HIGHWAY} fill="none" stroke="#ffe88b" strokeWidth="71" strokeLinejoin="round" />
      <path d="M2800 0L2560 325L2510 385" fill="none" stroke="#fff0a0" strokeWidth="44" />
      <path d="M2782 -10L2515 350M2820 0L2545 365" fill="none" stroke="#c9a63c" strokeWidth="4" strokeDasharray="16 7" />
      <ellipse cx="2506" cy="381" rx="34" ry="27" fill="#5478ea" stroke="#3f60c8" strokeWidth="2" />
      <text x="2506" y="391" textAnchor="middle" fontSize="28" fontWeight="700" fill="#fff" className="font-['Noto_Sans',sans-serif]">77</text>

      <g className="font-['Noto_Sans_CJK_KR',sans-serif]" textAnchor="middle" fontWeight="500" strokeLinejoin="round">
        {STREETS.map(([s, x, y, a], i) => (
          <text key={i} transform={`translate(${x} ${y}) rotate(${a})`} y="12" fontSize="34" fill={s === "서해안로" ? "#8a6a1c" : "#86815f"} stroke="#fffbdc" strokeWidth="5" strokeOpacity=".7" paintOrder="stroke">
            {s}
          </text>
        ))}
        {SMALL.map(([s, x, y], i) => (
          <text key={i} x={x} y={y + 12} fontSize="32" fill="#47555e" stroke="#fff" strokeWidth="7" paintOrder="stroke">
            {s}
          </text>
        ))}
        {POIS.map((p, i) => (
          <g key={i}>
            {p.k && p.k !== "ring" && (
              <g transform={`translate(${p.x} ${p.y})`}>
                <circle r="26" fill="#fff" fillOpacity=".75" />
                <circle r="23" fill={p.bg} />
                <Glyph k={p.k} />
              </g>
            )}
            {p.k === "ring" && (
              <g transform={`translate(${p.x} ${p.y})`}>
                <circle r="14" fill="#fff" stroke="#4a555c" strokeWidth="3" />
                <circle r="4" fill="#3d4b54" />
              </g>
            )}
            {p.t.map(([s, y]) => (
              <text key={s} x={p.lx ?? p.x} y={y + 14} textAnchor={p.lx ? "start" : "middle"} fontSize="39" fill={p.c ?? INK} stroke="#fff" strokeWidth="8" paintOrder="stroke">
                {s}
              </text>
            ))}
          </g>
        ))}
      </g>
      <path d="M2260 1003Q2254 982 2242 966L2219 930A51 51 0 1 1 2301 930L2278 966Q2266 982 2260 1003Z" fill="#2089fb" stroke="#1472dd" strokeWidth="2" />
      <text x="2260" y="920" textAnchor="middle" fontSize="60" fontWeight="700" fill="#fff" className="font-['Noto_Sans',sans-serif]">B</text>
      <path d="M28 1790V1824" stroke={INK} strokeWidth="5" />
    </svg>
  );
}

/* ----------------------------------------------------------------- page */

const FOOTER: { title: string; items: [string, number][] }[] = [
  { title: "회사소개", items: [["회사 연혁", 64], ["오시는길", 60], ["파트너", 45]] },
  { title: "제품소개", items: [["공압", 30], ["비공압", 45], ["테마별", 45], ["제품선정 가이드", 108]] },
  { title: "고객지원", items: [["견적문의", 60], ["업무문의", 60], ["CONTACT US", 104]] },
];

function Crumb({ label, w }: { label: string; w: number }) {
  return (
    <div className="flex h-full w-[214.500px] items-center justify-between border-r border-[#dcdcdc] pr-[19px] pb-px pl-[21px]">
      <Fit w={w} className="text-[17.500px]">{label}</Fit>
      <svg width="11" height="7" viewBox="0 0 11 7" className="mt-0.5">
        <path d="M0 .5H11L5.500 6.500Z" fill="#111" />
      </svg>
    </div>
  );
}

export default function App() {
  return (
    <div className="h-[2146px] w-[2880px] bg-white font-['Noto_Sans_CJK_KR',sans-serif] leading-none text-[#1b1b1b] [word-spacing:0.13em]">
      <div className="relative mx-auto flex w-[2100px] flex-col pt-[302px]">
        <header className="flex h-[90px] items-start border-b-2 border-[#e0e0e0]">
          <div className="pt-[16px] pl-[88px]">
            <Logo />
          </div>
          <nav className="flex gap-[106.500px] pt-[34px] pl-[663px] text-[19.500px] font-medium">
            <Fit w={68}>회사소개</Fit>
            <Fit w={68}>제품소개</Fit>
            <Fit w={68}>고객지원</Fit>
          </nav>
          <div className="ml-auto flex items-center gap-[6px] pt-[35px] pr-[91px]">
            <Fit w={51} className="font-['Inter',sans-serif] text-[16.500px] font-bold">MENU</Fit>
            <div className="flex w-[19px] flex-col gap-[3.500px]">
              <i className="block h-[2.500px] bg-[#111]" />
              <i className="block h-[2.500px] bg-[#111]" />
              <i className="block h-[2.500px] bg-[#111]" />
            </div>
          </div>
        </header>

        <div className="flex h-[52px] border-b-2 border-[#e0e0e0] pl-[289px]">
          <div className="flex h-full w-[91px] items-center justify-center border-x border-[#dcdcdc]">
            <Fit w={49} className="font-['Inter',sans-serif] text-[17.500px]">HOME</Fit>
          </div>
          <Crumb label="회사소개" w={60} />
          <Crumb label="오시는 길" w={64} />
        </div>

        <h1 className="flex h-[200px] items-center justify-center pt-[19px] pl-[3px] text-[51px] font-medium text-[#19234f] [-webkit-text-stroke:0.7px_#19234f]">
          <Fit w={191}>오시는 길</Fit>
        </h1>

        <main className="flex flex-col pl-[289px]">
          <MapView />
          <div className="flex w-[1522.500px] justify-between pt-[52px]">
            <div className="-ml-px flex flex-col">
              <div className="-mt-px flex gap-[15px] text-[26px] font-medium">
                <Fit w={85} className="-ml-px text-[#1a2350] [-webkit-text-stroke:0.3px_#1a2350]">(주)야코</Fit>
                <Fit w={610}>경기도 시흥시 산기대학로 27, 라성아카데미벤처 120호,141호</Fit>
              </div>
              <div className="ml-px flex pt-[25.500px] font-['Inter',sans-serif] text-[20px] text-[#222] [word-spacing:0]">
                <Fit w={37} className="mr-[12px] font-semibold text-[#1a2350]">TEL</Fit>
                <Fit w={133} className="mr-[39px]">031-434-4624</Fit>
                <Fit w={38} className="mr-[13px] font-semibold text-[#1a2350]">FAX</Fit>
                <Fit w={131} className="mr-[38px]">031-434-4623</Fit>
                <Fit w={73} className="mr-[11px] font-semibold text-[#1a2350]">E-MAIL</Fit>
                <Fit w={194}>yc03115@naver.com</Fit>
              </div>
            </div>
            <button className="flex h-[53px] w-[176px] items-center justify-center border-2 border-[#f37d40] text-[16px] font-bold text-[#ee5a14] [word-spacing:0.15em]">
              <Fit w={60}>지도 보기</Fit>
            </button>
          </div>
        </main>

        <button className="absolute top-[1398px] left-[1947px] flex size-[66px] items-center justify-center rounded-full bg-white pt-[2px] font-['Inter',sans-serif] text-[17.500px] text-[#ee5a14] shadow-[4px_4px_8px_rgba(0,0,0,0.2),0_0_3px_rgba(0,0,0,0.08)]">
          <Fit w={36}>TOP</Fit>
        </button>

        <footer className="mt-[151px] flex h-[316px] bg-[#12202d] text-[#a6acb2]">
          <div className="flex w-[1023px] flex-col pt-[65px] pl-[290px] text-[16px]">
            <Logo mono />
            <div className="-ml-px flex gap-[11px] pt-[40px]">
              <Fit w={66} className="font-['Inter',sans-serif] text-[16.500px]">Address.</Fit>
              <Fit w={221} className="text-[15.500px]">경기 시흥시 산기대학로 27 (우)15080</Fit>
            </div>
            <div className="-ml-[2px] flex items-center pt-[12px] font-['Inter',sans-serif] text-[16.500px] [word-spacing:0]">
              <Fit w={139}>Tel. 032-000-0000</Fit>
              <i className="mr-[13px] ml-[19px] block h-[12px] w-px bg-[#4c5863]" />
              <Fit w={143}>Fax. 032-000-0000</Fit>
              <i className="mr-[13px] ml-[19px] block h-[12px] w-px bg-[#4c5863]" />
              <Fit w={181}>Email. abcd@abcd.com</Fit>
            </div>
            <div className="flex -rotate-[0.3deg] pt-[25px] font-['Inter',sans-serif] text-[16.500px] text-[#48545f] [word-spacing:0]">
              <Fit w={407}>Copyright JONGWOOCOMPANY. All Rights Reserved</Fit>
            </div>
          </div>
          {FOOTER.map((col) => (
            <div key={col.title} className="-ml-[0.500px] mr-[0.500px] flex w-[263px] flex-col pt-[76.500px]">
              <Fit w={67.5} className="text-[19.500px] font-medium text-white">{col.title}</Fit>
              <div className="flex flex-col gap-[19.700px] pt-[24px] text-[17.500px]">
                {col.items.map(([label, w]) =>
                  label === "CONTACT US" ? (
                    <Fit key={label} w={w} className="font-['Inter',sans-serif] font-medium text-[#c3c7cb] [word-spacing:0]">{label}</Fit>
                  ) : (
                    <Fit key={label} w={w}>{label}</Fit>
                  ),
                )}
              </div>
            </div>
          ))}
        </footer>
      </div>
    </div>
  );
}
